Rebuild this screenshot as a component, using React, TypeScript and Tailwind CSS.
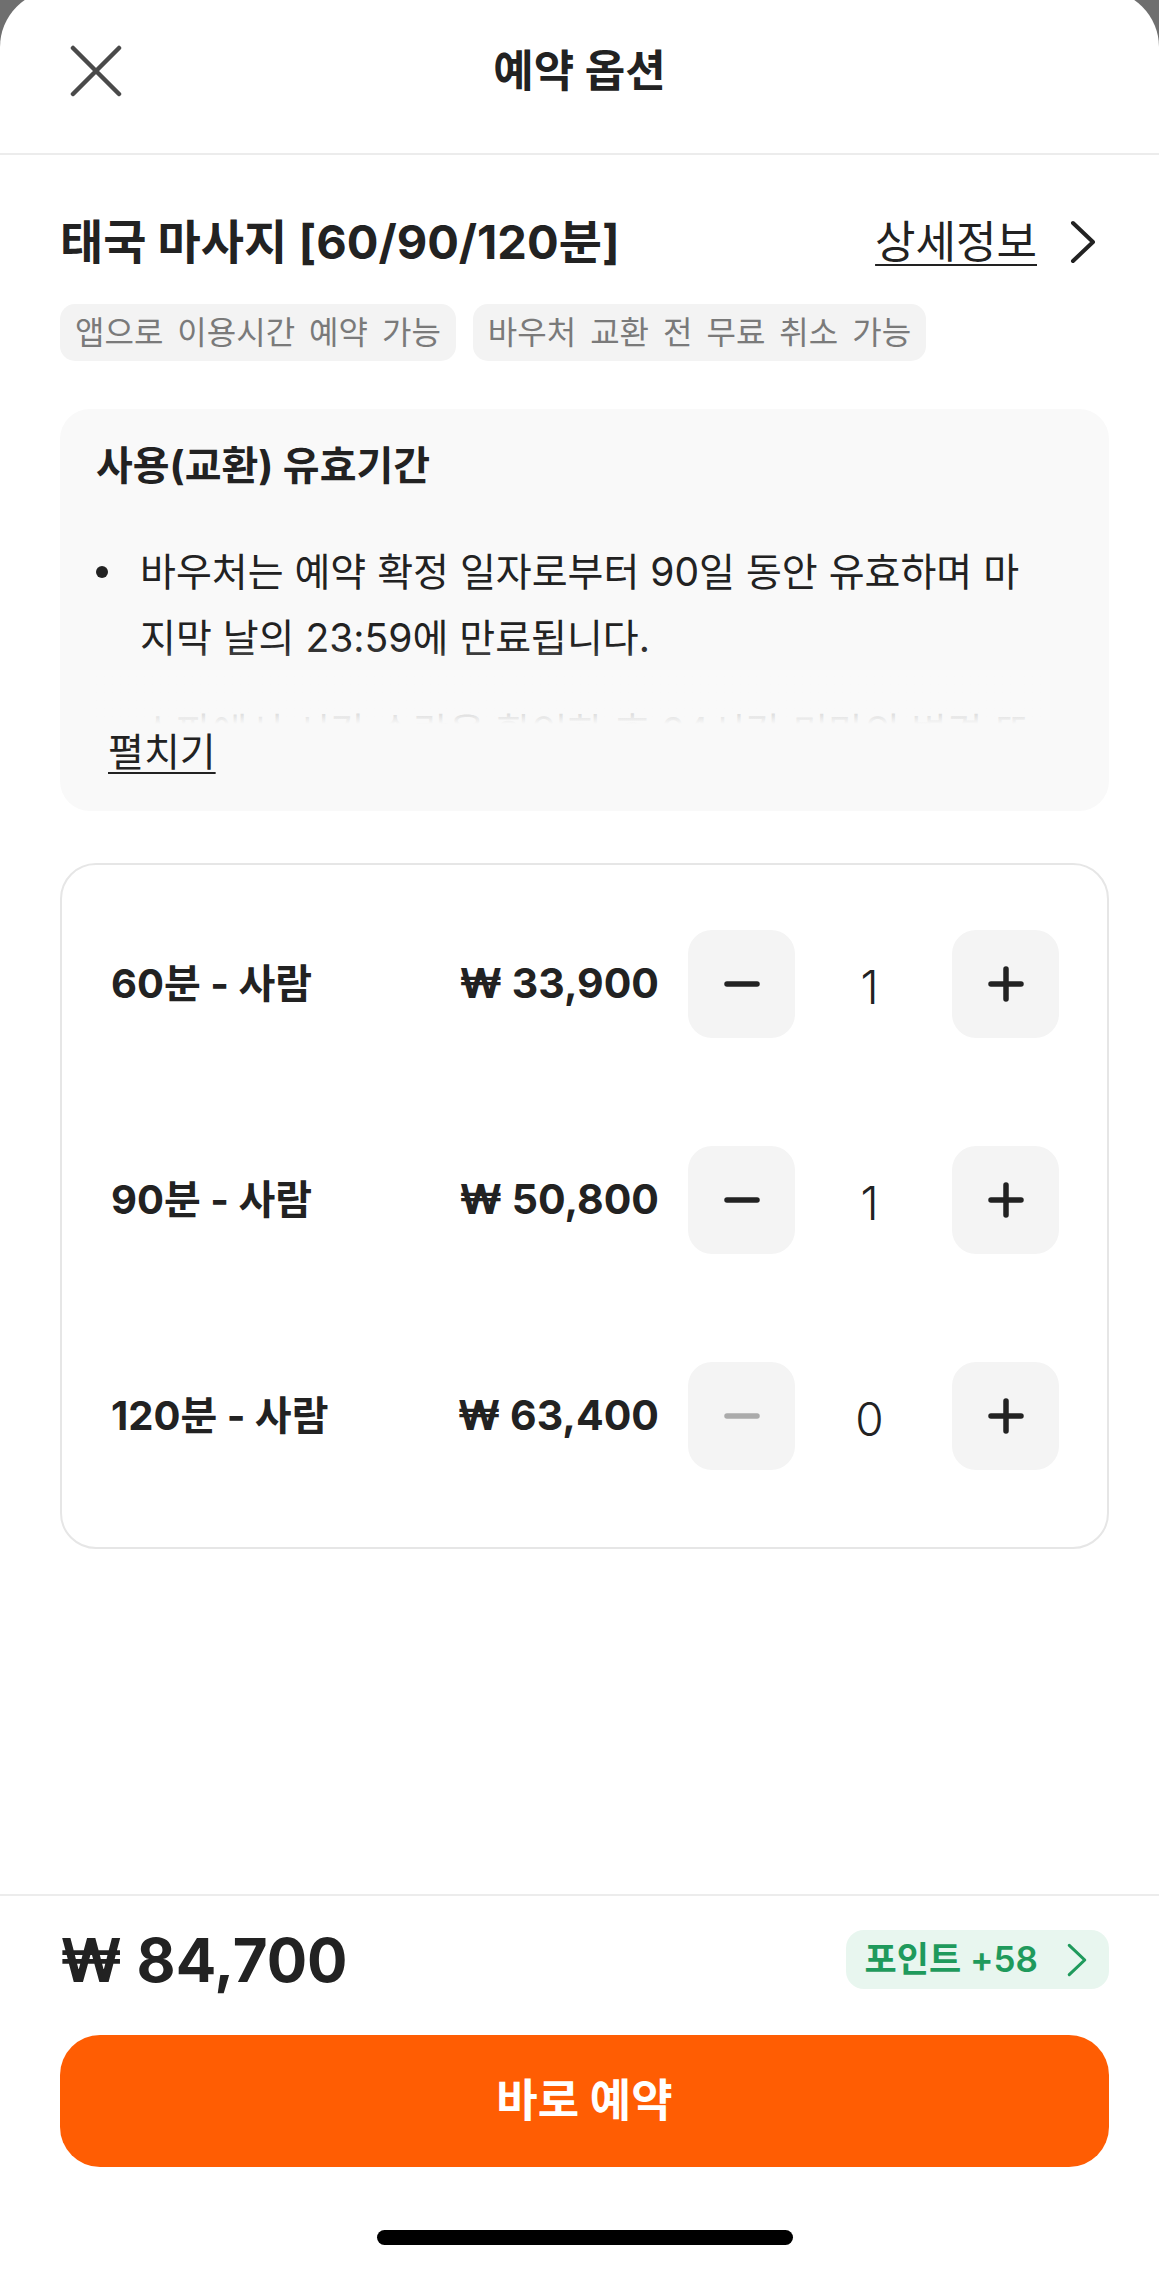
import { useState } from 'react';

type Option = {
    id: string;
    label: string;
    price: number;
};

const options: Option[] = [
    { id: '60', label: '60분 - 사람', price: 33900 },
    { id: '90', label: '90분 - 사람', price: 50800 },
    { id: '120', label: '120분 - 사람', price: 63400 },
];

const won = (n: number) => `₩ ${n.toLocaleString('en-US')}`;

function ChevronRight({ className }: { className?: string }) {
    return (
        <svg
            className={className}
            viewBox="0 0 28 44"
            fill="none"
            stroke="currentColor"
            strokeWidth="4"
            strokeLinecap="round"
            strokeLinejoin="round"
            aria-hidden="true"
        >
            <path d="M4 3L24 22L4 41" />
        </svg>
    );
}

function Stepper({
    value,
    onChange,
}: {
    value: number;
    onChange: (v: number) => void;
}) {
    const disabled = value <= 0;
    return (
        <div className="flex items-center">
            <button
                type="button"
                disabled={disabled}
                onClick={() => onChange(value - 1)}
                className="flex h-[108px] w-[107px] items-center justify-center rounded-[24px] bg-[#f4f4f4]"
            >
                <svg
                    className={`h-[36px] w-[36px] ${disabled ? 'text-[#ababab]' : 'text-[#222222]'}`}
                    viewBox="0 0 36 36"
                    fill="none"
                    stroke="currentColor"
                    strokeWidth="5.5"
                    strokeLinecap="round"
                >
                    <path d="M3 18H33" />
                </svg>
            </button>
            <span className="w-[157px] pr-[8px] pt-[6px] text-center text-[46px] font-light leading-none text-[#222222]">
                {value}
            </span>
            <button
                type="button"
                onClick={() => onChange(value + 1)}
                className="flex h-[108px] w-[107px] items-center justify-center rounded-[24px] bg-[#f4f4f4]"
            >
                <svg
                    className="h-[36px] w-[36px] text-[#222222]"
                    viewBox="0 0 36 36"
                    fill="none"
                    stroke="currentColor"
                    strokeWidth="5.5"
                    strokeLinecap="round"
                >
                    <path d="M3 18H33M18 3V33" />
                </svg>
            </button>
        </div>
    );
}

export default function App() {
    const [counts, setCounts] = useState<Record<string, number>>({
        '60': 1,
        '90': 1,
        '120': 0,
    });

    const total = options.reduce((sum, o) => sum + o.price * counts[o.id], 0);

    return (
        <div className="flex h-[2269px] flex-col overflow-hidden bg-[#6f6f6f] font-[Inter,'Noto_Sans_CJK_KR',sans-serif] text-[#222222]">
            <div className="-mt-[10px] flex flex-1 flex-col rounded-t-[57px] bg-white">
                {/* Header */}
                <header className="grid h-[165px] grid-cols-[1fr_auto_1fr] items-center border-b-2 border-[#ececec] px-[70px] pt-[10px] pb-[12px]">
                    <button type="button" aria-label="닫기" className="justify-self-start">
                        <svg
                            className="h-[52px] w-[52px] text-[#4a4a4a]"
                            viewBox="0 0 52 52"
                            fill="none"
                            stroke="currentColor"
                            strokeWidth="4.5"
                            strokeLinecap="round"
                        >
                            <path d="M3 3L49 49M49 3L3 49" />
                        </svg>
                    </button>
                    <h1 className="text-[44px] font-bold leading-none">예약 옵션</h1>
                    <div />
                </header>

                {/* Body */}
                <main className="flex-1 pl-[60px] pr-[50px] pt-[56px]">
                    <div className="flex items-center justify-between">
                        <h2 className="text-[47px] font-bold leading-[62px]">
                            태국 마사지 [60/90/120분]
                        </h2>
                        <a href="#" className="mr-[12px] flex items-center">
                            <span className="text-[44px] leading-[56px] underline decoration-2 underline-offset-[6px]">
                                상세정보
                            </span>
                            <ChevronRight className="ml-[32px] h-[44px] w-[28px]" />
                        </a>
                    </div>

                    <div className="mt-[31px] flex gap-[17px]">
                        {['앱으로 이용시간 예약 가능', '바우처 교환 전 무료 취소 가능'].map((t) => (
                            <span
                                key={t}
                                className="h-[57px] rounded-[15px] bg-[#f3f3f3] px-[15px] text-[32px] leading-[57px] [word-spacing:5px] text-[#7a7a7a]"
                            >
                                {t}
                            </span>
                        ))}
                    </div>

                    {/* Validity info */}
                    <section className="mt-[48px] rounded-[30px] bg-[#f9f9f9] pt-[30px] pb-[35px] pl-[36px] pr-[62px]">
                        <h3 className="text-[40px] font-bold leading-[54px]">사용(교환) 유효기간</h3>
                        <div className="relative mt-[46px] h-[185px] overflow-hidden">
                            <ul className="flex flex-col gap-[28px]">
                                <li className="flex">
                                    <span className="flex h-[66px] w-[44px] shrink-0 items-center">
                                        <span className="h-[12px] w-[12px] rounded-full bg-[#222222]" />
                                    </span>
                                    <p className="break-all text-[39px] leading-[66px]">
                                        바우처는 예약 확정 일자로부터 90일 동안 유효하며 마지막 날의 23:59에 만료됩니다.
                                    </p>
                                </li>
                                <li className="flex">
                                    <span className="flex h-[66px] w-[44px] shrink-0 items-center">
                                        <span className="h-[12px] w-[12px] rounded-full bg-[#222222]" />
                                    </span>
                                    <p className="break-all text-[39px] leading-[66px]">
                                        스파에서 시간 수락을 확인한 후 24시간 미만의 변경 또는 취소는 불가합니다.
                                    </p>
                                </li>
                            </ul>
                            <div className="absolute inset-x-0 bottom-0 h-[80px] bg-gradient-to-b from-[#f9f9f9]/0 to-[#f9f9f9]" />
                        </div>
                        <button
                            type="button"
                            className="ml-[12px] mt-[4px] block text-[39px] leading-[48px] underline decoration-2 underline-offset-[6px]"
                        >
                            펼치기
                        </button>
                    </section>

                    {/* Options */}
                    <section className="mt-[52px] flex flex-col gap-[108px] rounded-[36px] border-2 border-[#e6e6e6] pt-[65px] pb-[77px] pl-[49px] pr-[48px]">
                        {options.map((o) => (
                            <div key={o.id} className="flex items-center">
                                <span className="flex-1 text-[40px] font-bold">{o.label}</span>
                                <span className="mr-[29px] text-[41px] font-bold">{won(o.price)}</span>
                                <Stepper
                                    value={counts[o.id]}
                                    onChange={(v) => setCounts({ ...counts, [o.id]: Math.max(0, v) })}
                                />
                            </div>
                        ))}
                    </section>
                </main>

                {/* Footer */}
                <footer className="border-t-2 border-[#ececec] pl-[60px] pr-[50px] pt-[34px] pb-[24px]">
                    <div className="flex h-[59px] items-center justify-between">
                        <span className="text-[60px] font-bold leading-none">{won(total)}</span>
                        <button
                            type="button"
                            className="flex h-[59px] items-center rounded-[18px] bg-[#e8f6ef] pl-[19px] pr-[21px] text-[#1f9a5c]"
                        >
                            <span className="text-[35px] font-semibold">포인트 +58</span>
                            <ChevronRight className="ml-[28px] h-[34px] w-[22px]" />
                        </button>
                    </div>
                    <button
                        type="button"
                        className="mt-[46px] flex h-[132px] w-full items-center justify-center rounded-[40px] bg-[#ff5d03] text-[45px] font-bold text-white"
                    >
                        바로 예약
                    </button>
                    <div className="mx-auto mt-[63px] h-[15px] w-[416px] rounded-full bg-black" />
                </footer>
            </div>
        </div>
    );
}
